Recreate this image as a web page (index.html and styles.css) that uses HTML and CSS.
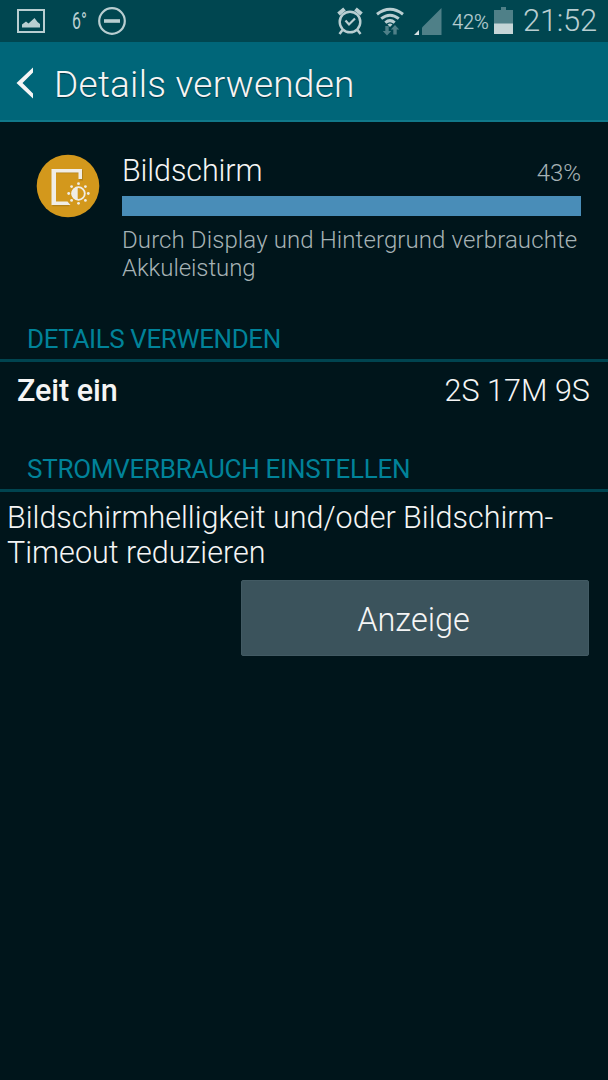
FILE: index.html
```html
<!DOCTYPE html>
<html lang="de">
<head>
<meta charset="utf-8">
<meta name="viewport" content="width=device-width">
<title>Details verwenden</title>
<link rel="stylesheet" href="styles.css">
</head>
<body>
<div class="screen">
  <div class="status">
    <svg class="s-image" width="28" height="24" viewBox="0 0 28 24"><rect x="1" y="1" width="26" height="22" fill="none" stroke="#b9ced1" stroke-width="2"/><path d="M5 18.500v-3l4-3 2.500 2L17.500 9l3 4 2.500 2v3.500z" fill="#b9ced1"/></svg>
    <span class="temp">6°</span>
    <svg class="s-block" width="28" height="28" viewBox="0 0 28 28" fill="none" stroke="#b9ced1"><circle cx="14" cy="14" r="12.800" stroke-width="2.200"/><path d="M6 14h16" stroke-width="3.600"/></svg>
    <span class="spacer"></span>
    <svg class="s-alarm" width="26" height="28" viewBox="0 0 26 28" fill="none" stroke="#b9ced1"><circle cx="13" cy="15" r="10.300" stroke-width="2.400"/><path d="M8.500 13.500l3.500 4 6-6" stroke-width="2.200"/><path d="M1.500 7l6-5M18.500 2l6 5" stroke-width="4"/><path d="M5.500 23L2.500 27M20.500 23l3 4" stroke-width="2.500"/></svg>
    <svg class="s-wifi" width="28" height="29" viewBox="0 0 28 29"><g fill="none" stroke="#b9ced1" stroke-width="3"><path d="M1 7.200Q14-2.800 27 7.200"/><path d="M5.200 11.700Q14 4.700 22.800 11.700"/><path d="M9.300 15.600Q14 11.700 18.700 15.600"/></g><path d="M11.500 17.500q2.500-2 5 0L14 20z" fill="#b9ced1"/><path d="M9.300 19h3.400v5h2.500L11 28.500 6.800 24h2.500zM17.300 27.500v-5h-2.500l4.200-4.500 4.200 4.500h-2.500v5z" fill="#4f8088"/></svg>
    <svg class="s-signal" width="28" height="28" viewBox="0 0 28 28"><path d="M8 27V19.500L27.500 0v27z" fill="#4f8088"/><path d="M0 27l5-5v5z" fill="#d5e1e3"/></svg>
    <span class="pct">42%</span>
    <svg class="s-batt" width="19" height="27" viewBox="0 0 19 27"><path d="M0 3h7V0h5v3h7v14H0z" fill="#4f8088"/><path d="M0 16.500h19V27H0z" fill="#c5d5d7"/></svg>
    <span class="clock">21:52</span>
  </div>
  <header class="bar">
    <svg class="back" width="18" height="32" viewBox="0 0 18 32"><path d="M17 .5v5L6.500 16 17 26.500v5L.5 16z" fill="#f5f5f5"/></svg>
    <h1>Details verwenden</h1>
  </header>
  <section class="usage">
    <svg class="app" width="64" height="64" viewBox="0 0 64 64"><circle cx="32" cy="32" r="31.300" fill="#d3981c"/><g transform="translate(.7 1)" fill="none" stroke="#9c7117" opacity=".6"><path d="M44.500 25.500V16.500h-27v33h15" stroke-width="3.600"/></g><path d="M46 25h-3.500v-6.500H20V47.500h11.500l3 3.500H15.500V15H46z" fill="#f0ede6"/><g fill="#f0ede6"><circle cx="42.500" cy="39.500" r="6.300" fill="none" stroke="#f0ede6" stroke-width="1.800"/><path d="M41.700 33.200a6.300 6.300 0 0 0 0 12.600z"/><circle cx="42.500" cy="29.700" r="1.400"/><circle cx="42.500" cy="49.300" r="1.400"/><circle cx="32.700" cy="39.500" r="1.400"/><circle cx="52.300" cy="39.500" r="1.400"/><circle cx="35.600" cy="32.600" r="1.400"/><circle cx="49.400" cy="32.600" r="1.400"/><circle cx="35.600" cy="46.400" r="1.400"/><circle cx="49.400" cy="46.400" r="1.400"/></g></svg>
    <div class="info">
      <div class="row"><span class="name">Bildschirm</span><span class="share">43%</span></div>
      <div class="meter"></div>
      <p class="desc"><span class="d1">Durch Display und Hintergrund verbrauchte</span><br><span class="d2">Akkuleistung</span></p>
    </div>
  </section>
  <h2 class="h-details"><span>DETAILS VERWENDEN</span></h2>
  <div class="time"><span class="label">Zeit ein</span><span class="value">2S 17M 9S</span></div>
  <h2 class="h-power"><span>STROMVERBRAUCH EINSTELLEN</span></h2>
  <p class="hint"><span class="t1">Bildschirmhelligkeit und/oder Bildschirm-</span><br><span class="t2">Timeout reduzieren</span></p>
  <button class="action"><span>Anzeige</span></button>
</div>
</body>
</html>
```
FILE: styles.css
```css
* { box-sizing: border-box; margin: 0; padding: 0; }
body { background: #00151b; font-family: Roboto, "Noto Sans", sans-serif; font-weight: 300; color: #f5f5f5; }
.screen { width: 608px; height: 1080px; overflow: hidden; background: #00151b; display: flex; flex-direction: column; }
.screen > * { flex-shrink: 0; }
svg { display: block; flex-shrink: 0; }
span { white-space: nowrap; }
.status { height: 42px; background: #004650; display: flex; align-items: flex-start; padding: 0 12px 0 17px; color: #b9ced1; line-height: 42px; }
.s-image { margin-top: 9px; }
.temp { width: 17px; margin-left: 27px; font-size: 24px; line-height: 43px; font-weight: 400; transform: scaleX(.66); transform-origin: left; }
.s-block { margin: 7px 0 0 9px; }
.spacer { flex: 1; }
.s-alarm { margin: 7px 13px 0 0; }
.s-wifi { margin: 7px 10px 0 0; }
.s-signal { margin: 8px 10px 0 0; }
.pct { width: 37px; font-size: 20px; font-weight: 300; line-height: 44px; letter-spacing: -.1px; margin-right: 5px; -webkit-text-stroke: .2px #b9ced1; }
.s-batt { margin: 7px 10px 0 0; }
.clock { width: 73px; font-size: 31px; letter-spacing: -.3px; }
.bar { height: 80px; background: #006679; border-bottom: 2px solid #10788a; display: flex; padding-left: 16px; }
.back { margin: 25px 20px 0 0; }
h1 { font-size: 37px; font-weight: 300; line-height: 85px; letter-spacing: .25px; text-shadow: 0 1px 1px #003640; }
.usage { height: 196px; padding: 31px 27px 0 36px; display: flex; }
.app { margin-top: 1px; }
.info { flex: 1; margin-left: 22px; }
.row { display: flex; justify-content: space-between; height: 43px; }
.name { font-size: 30.5px; line-height: 36px; letter-spacing: -.1px; }
.share { font-size: 24px; line-height: 40px; color: #a6b2b5; }
.meter { height: 20px; background: #498db8; margin-bottom: 10px; }
.desc { font-size: 24px; line-height: 28px; color: #a6b2b5; }
.d1 { letter-spacing: .11px; }
.d2 { letter-spacing: -.08px; }
h2 { height: 44px; font-size: 26px; line-height: 42px; font-weight: 400; color: #008299; border-bottom: 3px solid #004450; padding-left: 27px; }
.h-details { letter-spacing: -.4px; }
.h-power { letter-spacing: -.27px; }
.time { height: 86px; display: flex; justify-content: space-between; padding: 0 18px 0 17px; font-size: 30.5px; line-height: 57px; }
.label { font-weight: 500; letter-spacing: -.05px; }
.value { letter-spacing: .05px; }
.hint { font-size: 30.5px; line-height: 35px; padding: 8px 0 0 7px; height: 88px; }
.action { align-self: flex-end; width: 348px; height: 76px; margin-right: 19.5px; background: #3b535c; border: 1px solid #425a63; border-radius: 2px; font: 300 32.5px/76px Roboto, sans-serif; color: #f5f5f5; padding: 1px 2px 0 0; }
```
